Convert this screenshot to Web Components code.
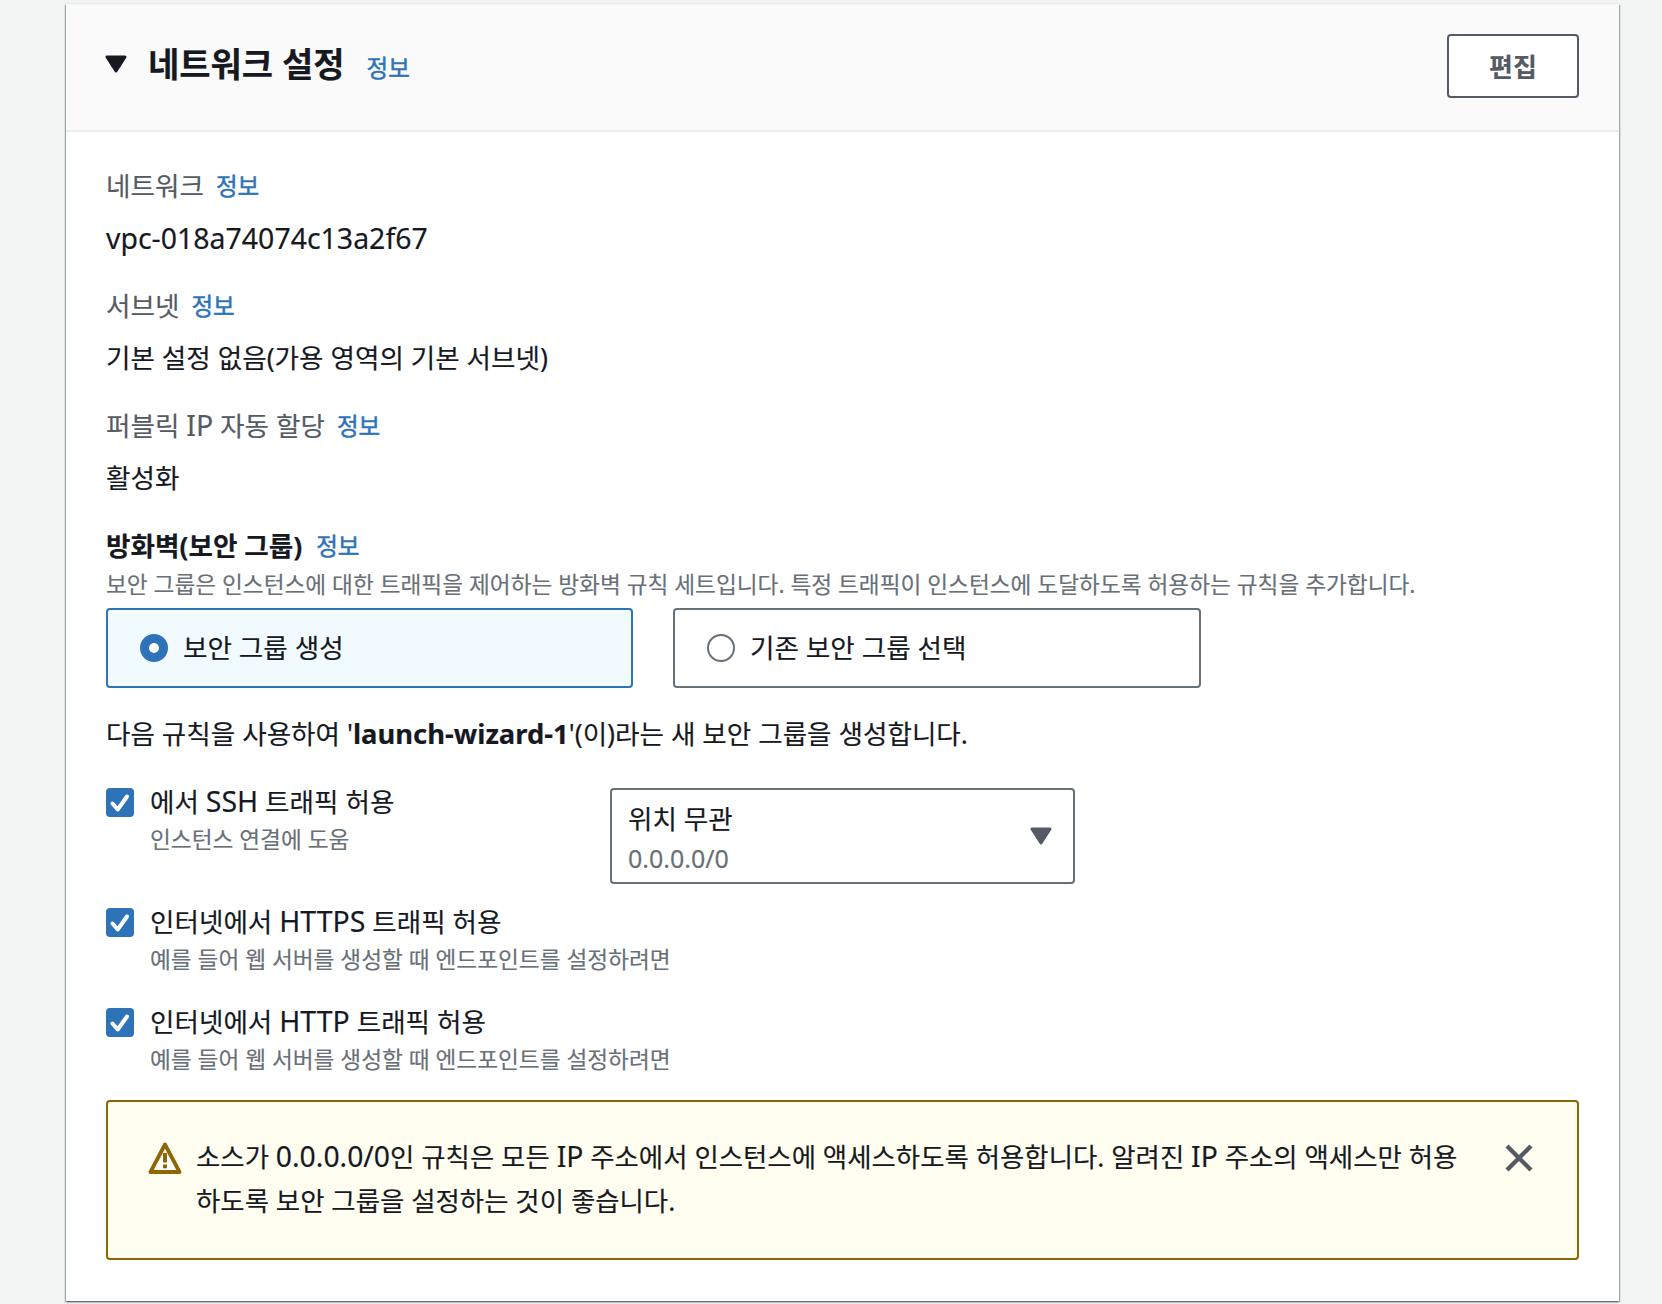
<!DOCTYPE html>
<html lang="ko">
<head>
<meta charset="utf-8">
<title>네트워크 설정</title>
<style>
  html, body { margin: 0; padding: 0; background: #f2f3f3; }
  body {
    font-family: "Noto Sans", "Noto Sans CJK KR", sans-serif;
    font-size: 26.6px;
    color: #16191f;
    -webkit-text-stroke: .15px;
  }
</style>
</head>
<body>
<network-panel>
  <span slot="title">네트워크 설정</span>

  <info-field><span slot="label">네트워크</span><lat-in style="vertical-align:-1px">vpc-018a74074c13a2f67</lat-in></info-field>
  <info-field><span slot="label">서브넷</span>기본 설정 없음(가용 영역의 기본 서브넷)</info-field>
  <info-field><span slot="label">퍼블릭 <lat-in>IP</lat-in> 자동 할당</span>활성화</info-field>

  <firewall-head label="방화벽(보안 그룹)">보안 그룹은 인스턴스에 대한 트래픽을 제어하는 방화벽 규칙 세트입니다. 특정 트래픽이 인스턴스에 도달하도록 허용하는 규칙을 추가합니다.</firewall-head>

  <tile-group>
    <radio-tile checked>보안 그룹 생성</radio-tile>
    <radio-tile>기존 보안 그룹 선택</radio-tile>
  </tile-group>

  <rule-note>다음 규칙을 사용하여 '<b>launch-wizard-1</b>'(이)라는 새 보안 그룹을 생성합니다.</rule-note>

  <rule-check>
    <span slot="label">에서 <lat-in>SSH</lat-in> 트래픽 허용</span>
    <span slot="hint">인스턴스 연결에 도움</span>
    <source-select value="위치 무관" detail="0.0.0.0/0"></source-select>
  </rule-check>
  <rule-check>
    <span slot="label">인터넷에서 <lat-in>HTTPS</lat-in> 트래픽 허용</span>
    <span slot="hint">예를 들어 웹 서버를 생성할 때 엔드포인트를 설정하려면</span>
  </rule-check>
  <rule-check style="min-height:98px">
    <span slot="label">인터넷에서 <lat-in>HTTP</lat-in> 트래픽 허용</span>
    <span slot="hint">예를 들어 웹 서버를 생성할 때 엔드포인트를 설정하려면</span>
  </rule-check>

  <warn-alert>소스가 <lat-in>0.0.0.0/0</lat-in>인 규칙은 모든 <lat-in>IP</lat-in> 주소에서 인스턴스에 액세스하도록 허용합니다. 알려진 <lat-in>IP</lat-in> 주소의 액세스만 허용<br>하도록 보안 그룹을 설정하는 것이 좋습니다.</warn-alert>
</network-panel>

<script>
  const CARET = '<svg viewBox="0 0 22 20" width="22" height="20"><path d="M2 3h18l-9 14z" fill="currentColor" stroke="currentColor" stroke-width="3" stroke-linejoin="round"/></svg>';

  function define(name, css, html, setup) {
    customElements.define(name, class extends HTMLElement {
      connectedCallback() {
        this.attachShadow({ mode: 'open' });
        this.shadowRoot.innerHTML = '<style>' + css + '</style>' + html;
        if (setup) setup(this);
      }
    });
  }

  const attr = (el, sel, name) => { el.shadowRoot.querySelector(sel).textContent = el.getAttribute(name); };

  // latin runs sit a little larger than the hangul around them
  define('lat-in', ':host { display: inline; font-size: 1.07em; line-height: 0; }', '<slot></slot>');

  define('info-link', `
    :host { display: inline-block; color: #2e73b8; font-size: 23.5px; font-weight: 400; line-height: 40px; height: 40px; -webkit-text-stroke: .5px #2e73b8; }
  `, '<slot>정보</slot>');

  define('network-panel', `
    :host {
      display: block;
      margin: 4px 43px 3px 66px;
      background: #fff;
      box-shadow: 0 1px 2px 0 rgba(0,28,36,.5), 1px 1px 1px 0 rgba(0,28,36,.22), -1px 1px 1px 0 rgba(0,28,36,.22);
    }
    header {
      display: flex;
      align-items: center;
      height: 126px;
      padding: 0 40px 0 40px;
      background: #fafafa;
      border-bottom: 2px solid #eaeded;
    }
    .caret { display: flex; width: 22px; margin: 0 21px 6px -1px; color: #16191f; }
    h2 { margin: 0 22px 6px 0; font-size: 34px; font-weight: 700; line-height: 48px; }
    info-link { margin-top: 2px; }
    button {
      margin: 0 0 2px auto;
      width: 132px;
      height: 64px;
      padding: 0;
      background: #fff;
      border: 2px solid #545b64;
      border-radius: 4px;
      color: #545b64;
      font: 700 26px "Noto Sans", "Noto Sans CJK KR", sans-serif;
    }
    .body { padding: 34px 40px 41px 40px; }
  `, `
    <header>
      <span class="caret">${CARET}</span>
      <h2><slot name="title"></slot></h2>
      <info-link></info-link>
      <button>편집</button>
    </header>
    <div class="body"><slot></slot></div>
  `);

  define('info-field', `
    :host { display: block; margin-bottom: 28px; line-height: 40px; }
    .top { display: flex; gap: 12px; height: 40px; color: #545b64; }
    .value { margin-top: 12px; height: 40px; }
  `, `
    <div class="top"><span><slot name="label"></slot></span><info-link></info-link></div>
    <div class="value"><slot></slot></div>
  `);

  define('firewall-head', `
    :host { display: block; margin-bottom: 5px; }
    .top { display: flex; gap: 14px; height: 40px; line-height: 40px; font-weight: 700; }
    .desc { color: #687078; font-size: 22.67px; height: 36px; line-height: 36px; margin-top: 1px; white-space: nowrap; }
  `, `
    <div class="top"><span class="label"></span><info-link></info-link></div>
    <div class="desc"><slot></slot></div>
  `, el => attr(el, '.label', 'label'));

  define('tile-group', `
    :host { display: grid; grid-template-columns: 527px 528px; gap: 40px; }
  `, '<slot></slot>');

  define('radio-tile', `
    :host {
      display: flex;
      align-items: center;
      gap: 15px;
      height: 80px;
      box-sizing: border-box;
      padding: 0 32px;
      border: 2px solid #687078;
      border-radius: 4px;
      background: #fff;
    }
    :host([checked]) { border-color: #2e73b8; background: #f1faff; }
    .dot {
      width: 28px; height: 28px;
      box-sizing: border-box;
      border: 2px solid #687078;
      border-radius: 50%;
      background: #fff;
    }
    :host([checked]) .dot { border: 9px solid #2e73b8; }
    .text { margin-bottom: 3px; }
  `, '<span class="dot"></span><span class="text"><slot></slot></span>');

  define('rule-note', `
    :host { display: block; height: 40px; margin: 26px 0 28px; line-height: 40px; }
    ::slotted(b) { font-weight: 700; font-size: 1.03em; line-height: 0; }
  `, '<slot></slot>');

  define('rule-check', `
    :host { display: grid; grid-template-columns: 504px 465px; min-height: 100px; }
    .left { display: flex; gap: 16px; white-space: nowrap; }
    .box {
      width: 28px; height: 29px;
      margin-top: 6px;
      border-radius: 4px;
      background: #2e73b8;
      display: flex; align-items: center; justify-content: center;
      flex: none;
    }
    .label { height: 40px; line-height: 40px; }
    .hint { color: #687078; font-size: 22.67px; height: 36px; line-height: 36px; }
  `, `
    <div class="left">
      <span class="box"><svg viewBox="0 0 28 29" width="28" height="29"><path d="M6.5 15.5l5.2 6L21 8.5" fill="none" stroke="#fff" stroke-width="4" stroke-linecap="round" stroke-linejoin="round"/></svg></span>
      <div><div class="label"><slot name="label"></slot></div><div class="hint"><slot name="hint"></slot></div></div>
    </div>
    <div><slot></slot></div>
  `);

  define('source-select', `
    :host {
      display: flex;
      align-items: center;
      justify-content: space-between;
      box-sizing: border-box;
      height: 96px;
      margin: 6px 0 18px;
      padding: 0 21px 0 16px;
      border: 2px solid #687078;
      border-radius: 4px;
      background: #fff;
    }
    .value { height: 40px; line-height: 40px; margin-top: 4px; }
    .detail { color: #687078; height: 38px; line-height: 38px; font-size: 25px; }
    .caret { display: flex; color: #545b64; }
  `, `
    <div><div class="value"></div><div class="detail"></div></div>
    <span class="caret">${CARET}</span>
  `, el => { attr(el, '.value', 'value'); attr(el, '.detail', 'detail'); });

  define('warn-alert', `
    :host {
      display: flex;
      box-sizing: border-box;
      height: 160px;
      padding: 33px 35px 0 40px;
      border: 2px solid #8d6605;
      border-radius: 4px;
      background: #fffef0;
      font-size: 26.45px;
    }
    .icon { flex: none; width: 34px; height: 34px; margin: 6px 14px 0 0; }
    .text { flex: 1; line-height: 44px; padding-right: 36px; }
    .close { flex: none; width: 30px; height: 30px; margin: 8px 8px 0 0; }
  `, `
    <svg class="icon" viewBox="0 0 34 34">
      <path d="M17 3.5L2.5 31h29z" fill="#fff" stroke="#8d6605" stroke-width="3.8" stroke-linejoin="round"/>
      <rect x="15" y="12" width="4" height="9.5" fill="#8d6605"/>
      <rect x="15" y="23.5" width="4" height="3.8" fill="#8d6605"/>
    </svg>
    <div class="text"><slot></slot></div>
    <svg class="close" viewBox="0 0 30 30"><path d="M3 3l24 24M27 3L3 27" fill="none" stroke="#545b64" stroke-width="4.4"/></svg>
  `);
</script>
</body>
</html>
